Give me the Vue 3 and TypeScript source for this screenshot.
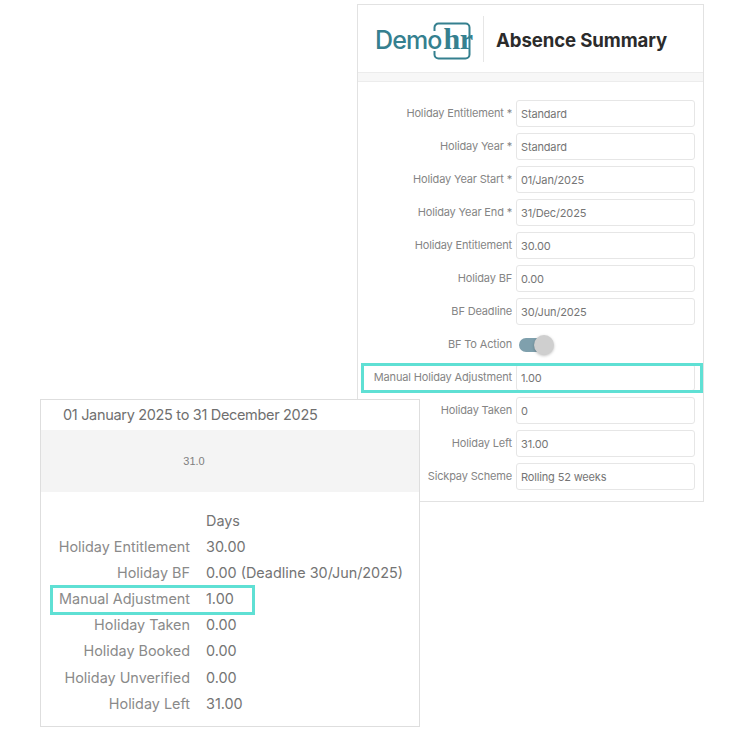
<script setup lang="ts">
interface Field { label: string; value: string; highlight?: boolean; toggle?: boolean }
const fields: Field[] = [
  { label: 'Holiday Entitlement *', value: 'Standard' },
  { label: 'Holiday Year *', value: 'Standard' },
  { label: 'Holiday Year Start *', value: '01/Jan/2025' },
  { label: 'Holiday Year End *', value: '31/Dec/2025' },
  { label: 'Holiday Entitlement', value: '30.00' },
  { label: 'Holiday BF', value: '0.00' },
  { label: 'BF Deadline', value: '30/Jun/2025' },
  { label: 'BF To Action', value: '', toggle: true },
  { label: 'Manual Holiday Adjustment', value: '1.00', highlight: true },
  { label: 'Holiday Taken', value: '0' },
  { label: 'Holiday Left', value: '31.00' },
  { label: 'Sickpay Scheme', value: 'Rolling 52 weeks' },
]
const summary: { label: string; value: string; highlight?: boolean }[] = [
  { label: '', value: 'Days' },
  { label: 'Holiday Entitlement', value: '30.00' },
  { label: 'Holiday BF', value: '0.00 (Deadline 30/Jun/2025)' },
  { label: 'Manual Adjustment', value: '1.00', highlight: true },
  { label: 'Holiday Taken', value: '0.00' },
  { label: 'Holiday Booked', value: '0.00' },
  { label: 'Holiday Unverified', value: '0.00' },
  { label: 'Holiday Left', value: '31.00' },
]
</script>

<template>
  <div class="page">
    <section class="form-card">
      <header class="head">
        <div class="logo">
          <span class="demo">Demo</span><span class="hr">hr</span>
          <svg class="logo-box" width="38" height="38" viewBox="0 0 38 38" fill="none">
            <path d="M1.5 9V5.5a4 4 0 0 1 4-4h27a4 4 0 0 1 4 4v27a4 4 0 0 1-4 4h-27a4 4 0 0 1-4-4V29" stroke="#35808f" stroke-width="2" />
          </svg>
        </div>
        <div class="divider"></div>
        <h1 class="title">Absence Summary</h1>
      </header>
      <div class="strip"></div>
      <div class="fields">
        <div v-for="f in fields" :key="f.label" class="field">
          <span class="field-label">{{ f.label }}</span>
          <div v-if="f.toggle" class="toggle"><span class="knob"></span></div>
          <div v-else class="input">{{ f.value }}</div>
          <span v-if="f.highlight" class="mark"></span>
        </div>
      </div>
    </section>

    <section class="summary-card">
      <div class="period">01 January 2025 to 31 December 2025</div>
      <div class="chart">31.0</div>
      <div class="rows">
        <div v-for="r in summary" :key="r.value + r.label" class="row" :class="{ marked: r.highlight }">
          <span class="row-label">{{ r.label }}</span>
          <span class="row-value">{{ r.value }}</span>
        </div>
      </div>
    </section>
  </div>
</template>

<style scoped>
.page {
  width: 732px;
  height: 742px;
  overflow: hidden;
  padding-top: 4px;
  box-sizing: border-box;
  background: #fff;
  font-family: Inter, "Noto Sans", sans-serif;
  color: #7a7a7a;
}
.form-card {
  width: 347px;
  height: 498px;
  margin-left: 357px;
  box-sizing: border-box;
  border: 1px solid #e2e2e2;
  background: #fff;
}
.head {
  height: 67px;
  display: flex;
  align-items: center;
  box-sizing: border-box;
  padding-left: 17px;
}
.logo {
  position: relative;
  width: 108px;
  display: flex;
  align-items: baseline;
  line-height: 1;
  color: #35808f;
  flex: none;
}
.demo {
  font-size: 25px;
  font-weight: 500;
  letter-spacing: -0.9px;
}
.hr {
  font-family: "Liberation Serif", serif;
  font-size: 30px;
  font-weight: 700;
  letter-spacing: -0.4px;
  margin-left: 2px;
}
.logo-box {
  position: absolute;
  left: 58px;
  top: -2px;
}
.divider {
  width: 1px;
  height: 46px;
  background: #e6e6e6;
  flex: none;
}
.title {
  margin: 2px 0 0 12px;
  font-size: 18.6px;
  font-weight: 700;
  color: #2b2b2b;
  letter-spacing: -0.1px;
}
.strip {
  height: 8px;
  background: #f7f7f7;
  border-top: 1px solid #ececec;
  border-bottom: 1px solid #ececec;
}
.fields {
  display: flex;
  flex-direction: column;
  gap: 6px;
  padding-top: 18px;
}
.field {
  position: relative;
  display: flex;
  align-items: center;
  height: 27px;
}
.field-label {
  width: 154px;
  flex: none;
  text-align: right;
  font-size: 11px;
  letter-spacing: -0.16px;
  color: #858585;
  white-space: nowrap;
  position: relative;
  top: -1px;
}
.input {
  width: 179px;
  height: 27px;
  margin-left: 4px;
  box-sizing: border-box;
  border: 1px solid #e6e6e6;
  border-radius: 3px;
  padding: 0 4px;
  display: flex;
  align-items: center;
  font-size: 11px;
  letter-spacing: -0.15px;
  color: #757575;
}
.toggle {
  position: relative;
  width: 30px;
  height: 14px;
  margin-left: 7px;
  border-radius: 7px;
  background: #7fa0ad;
}
.knob {
  position: absolute;
  right: -5px;
  top: -3px;
  width: 20px;
  height: 20px;
  border-radius: 50%;
  background: #cfcfcf;
  box-shadow: 0 1px 3px rgba(0, 0, 0, 0.25);
}
.mark {
  position: absolute;
  left: 3px;
  top: -1px;
  width: 342px;
  height: 30px;
  box-sizing: border-box;
  border: 3px solid #5fe0d4;
  pointer-events: none;
}
.summary-card {
  position: relative;
  width: 380px;
  height: 328px;
  margin: -103px 0 0 40px;
  box-sizing: border-box;
  border: 1px solid #dedede;
  background: #fff;
}
.period {
  height: 30px;
  line-height: 29px;
  padding-left: 22px;
  font-size: 14.5px;
  color: #6f6f6f;
  letter-spacing: -0.32px;
}
.chart {
  height: 62px;
  background: #f4f4f4;
  display: flex;
  align-items: center;
  justify-content: center;
  box-sizing: border-box;
  padding-right: 72px;
  font-family: "Liberation Sans", sans-serif;
  font-size: 11px;
  color: #808080;
}
.rows {
  display: flex;
  flex-direction: column;
  gap: 0;
  padding-top: 15.5px;
}
.row {
  position: relative;
  display: flex;
  gap: 16px;
  height: 26.2px;
  line-height: 26px;
  font-size: 14.4px;
  white-space: nowrap;
}
.row-label {
  width: 149px;
  flex: none;
  text-align: right;
  color: #8a8a8a;
}
.row-value {
  color: #747474;
}
.marked::after {
  content: "";
  position: absolute;
  left: 9px;
  top: -1px;
  width: 205px;
  height: 30px;
  box-sizing: border-box;
  border: 3px solid #5fe0d4;
}
</style>
